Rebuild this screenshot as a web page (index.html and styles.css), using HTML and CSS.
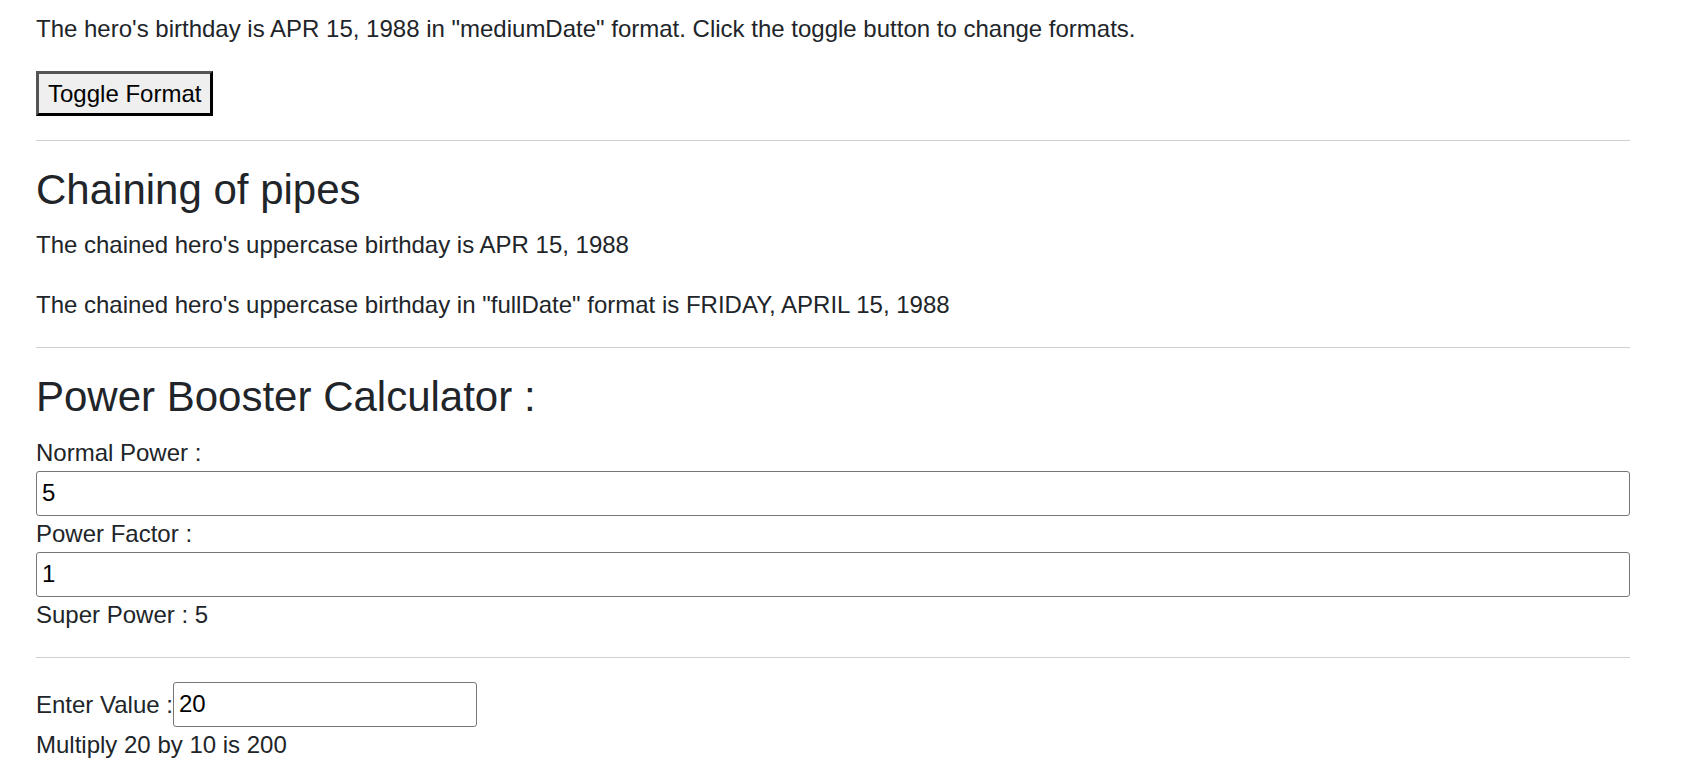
FILE: index.html
```html
<!DOCTYPE html>
<html lang="en">
<head>
<meta charset="utf-8">
<title>Pipes</title>
<link rel="stylesheet" href="styles.css">
</head>
<body>
<div class="page">
  <p class="text">The hero's birthday is APR 15, 1988 in "mediumDate" format. Click the toggle button to change formats.</p>
  <div class="actions"><button class="toggle" type="button">Toggle Format</button></div>
  <hr class="rule">
  <h3 class="title">Chaining of pipes</h3>
  <p class="text">The chained hero's uppercase birthday is APR 15, 1988</p>
  <p class="text">The chained hero's uppercase birthday in "fullDate" format is FRIDAY, APRIL 15, 1988</p>
  <hr class="rule">
  <h3 class="title">Power Booster Calculator :</h3>
  <div class="field-label">Normal Power :</div>
  <input class="field" type="text" value="5">
  <div class="field-label">Power Factor :</div>
  <input class="field" type="text" value="1">
  <div class="line">Super Power : 5</div>
  <hr class="rule">
  <div class="line">Enter Value :<input class="small-field" type="text" value="20"></div>
  <div class="line">Multiply 20 by 10 is 200</div>
</div>
</body>
</html>
```
FILE: styles.css
```css
html, body {
  margin: 0;
  padding: 0;
  background: #fff;
}
body {
  font-family: "Liberation Sans", Arial, sans-serif;
  font-size: 24px;
  line-height: 36px;
  color: #212529;
}
.page {
  padding: 11px 51px 0 36px;
}
.text {
  margin: 0 0 24px 0;
}
.actions {
  display: flex;
}
.toggle {
  font-family: inherit;
  font-size: 24px;
  line-height: 36px;
  color: #000;
  background: #efefef;
  border: 3px solid;
  border-color: #555 #000 #000 #555;
  padding: 1.5px 9px;
  margin: 0;
  border-radius: 0;
}
.rule {
  margin: 24px 0;
  border: 0;
  border-top: 1.5px solid #d0d0d0;
  height: 0;
}
.title {
  margin: 0 0 12px 0;
  font-size: 42px;
  line-height: 50.4px;
  font-weight: 500;
}
.field-label, .line {
  margin: 0;
}
.field {
  display: block;
  width: 100%;
  box-sizing: border-box;
  height: 45px;
  margin: 0;
  padding: 1.5px 5px;
  font-family: inherit;
  font-size: 24px;
  line-height: 36px;
  color: #000;
  background: #fff;
  border: 1.5px solid #767676;
  border-radius: 3px;
  outline: none;
}
.small-field {
  width: 304px;
  box-sizing: border-box;
  height: 45px;
  margin: 0;
  padding: 1.5px 5px;
  font-family: inherit;
  font-size: 24px;
  line-height: 36px;
  color: #000;
  background: #fff;
  border: 1.5px solid #767676;
  border-radius: 3px;
  vertical-align: baseline;
}
```
